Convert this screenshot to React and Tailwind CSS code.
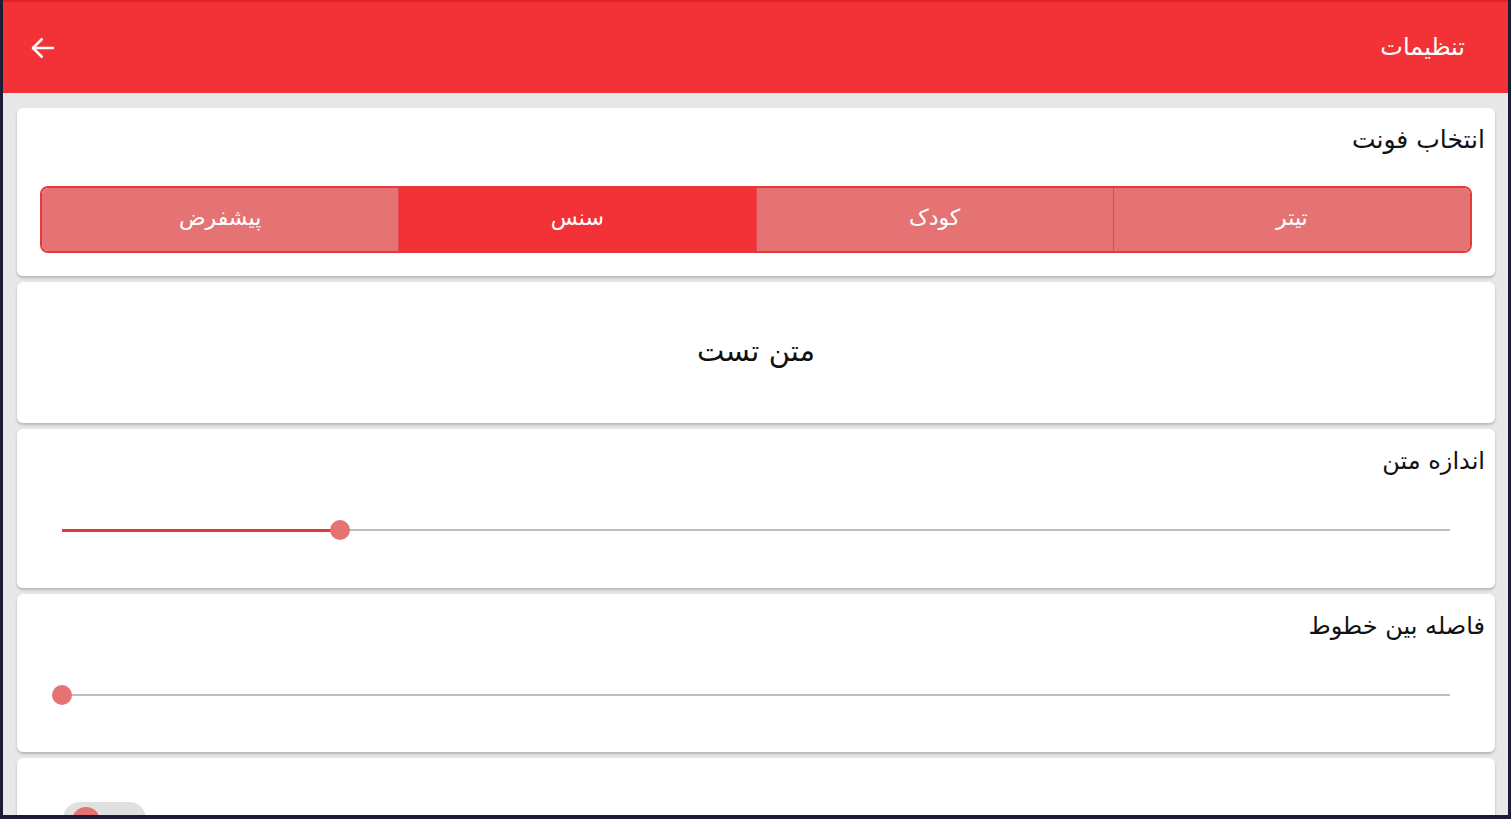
import React from "react";

const font = { fontFamily: '"DejaVu Sans", "Noto Sans", sans-serif' };

function Slider({ pct }) {
  return (
    <div className="relative mx-[45px] h-[2px] bg-[#bdbdbd]" dir="ltr">
      <div className="absolute left-0 top-[-0.5px] h-[3px] bg-[#e53935]" style={{ width: pct + "%" }} />
      <div
        className="absolute top-1/2 w-[20px] h-[20px] -translate-x-1/2 -translate-y-1/2 rounded-full bg-[#e57373]"
        style={{ left: pct + "%" }}
      />
    </div>
  );
}

export default function App() {
  const segs = [
    { t: "تیتر", a: false },
    { t: "کودک", a: false },
    { t: "سنس", a: true },
    { t: "پیشفرض", a: false },
  ];
  return (
    <div className="w-[1511px] h-[819px] bg-[#1d1c35] overflow-hidden" style={font}>
      <div className="ml-[3px] w-[1505px] h-[815px] overflow-hidden bg-[#e8e8e8] flex flex-col">
        <div className="h-[93px] shrink-0 bg-[#f23236] border-t-[2px] border-[#dc2327] flex items-center justify-between pl-[25px] pr-[43px]">
          <svg width="30" height="30" viewBox="0 0 24 24" fill="none" stroke="white" strokeWidth="2" strokeLinecap="round" strokeLinejoin="round">
            <path d="M20 12H4" />
            <path d="M11 5l-7 7 7 7" />
          </svg>
          <div className="text-white text-[24px] leading-[32px] -mt-[2px]" dir="rtl">تنظیمات</div>
        </div>
        <div className="flex flex-col gap-[6px] pt-[15px] pl-[14px] pr-[13px]">
          <div className="h-[168px] bg-white rounded-[6px] shadow-[0_2px_3px_rgba(0,0,0,0.22)] flex flex-col" dir="rtl">
            <div className="pr-[10px] pt-[16px] text-[25px] text-[#111] leading-[32px]">انتخاب فونت</div>
            <div className="mx-[23px] mt-[30px] h-[67px] flex rounded-[8px] border-[2px] border-[#e53a3c] overflow-hidden">
              {segs.map((s, i) => (
                <div
                  key={i}
                  className={
                    "flex-1 flex items-center justify-center text-white text-[22px] pb-[4px] " +
                    (s.a ? "bg-[#f23236] " : "bg-[#e57373] ") +
                    (i > 0 ? "border-r border-[#e5484b]" : "")
                  }
                >
                  {s.t}
                </div>
              ))}
            </div>
          </div>
          <div className="h-[141px] bg-white rounded-[6px] shadow-[0_2px_3px_rgba(0,0,0,0.22)] flex items-center justify-center" dir="rtl">
            <div className="text-[29px] text-[#111] -mt-[2px]">متن تست</div>
          </div>
          <div className="h-[159px] bg-white rounded-[6px] shadow-[0_2px_3px_rgba(0,0,0,0.22)] flex flex-col">
            <div className="pr-[10px] pt-[16px] text-[24px] text-[#111] leading-[32px]" dir="rtl">اندازه متن</div>
            <div className="mt-[52px]">
              <Slider pct={20} />
            </div>
          </div>
          <div className="h-[158px] bg-white rounded-[6px] shadow-[0_2px_3px_rgba(0,0,0,0.22)] flex flex-col">
            <div className="pr-[10px] pt-[16px] text-[24px] text-[#111] leading-[32px]" dir="rtl">فاصله بین خطوط</div>
            <div className="mt-[52px]">
              <Slider pct={0} />
            </div>
          </div>
          <div className="h-[140px] bg-white rounded-[6px] shadow-[0_2px_3px_rgba(0,0,0,0.22)] flex items-start justify-between pl-[46px] pr-[10px] pt-[44px]">
            <div className="relative w-[83px] h-[34px] rounded-full bg-[#e0e0e0]">
              <div className="absolute left-[9px] top-[5px] w-[28px] h-[28px] rounded-full bg-[#e57373]" />
            </div>
            <div className="text-[24px] text-[#111] mt-[8px]" dir="rtl">حالت شب</div>
          </div>
        </div>
      </div>
    </div>
  );
}
